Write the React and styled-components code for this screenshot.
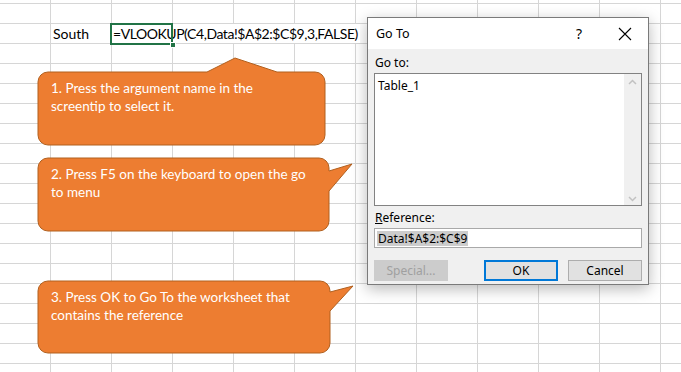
import React from 'react';
import styled, { createGlobalStyle } from 'styled-components';

const GlobalStyle = createGlobalStyle`
    html, body {
        margin: 0;
        padding: 0;
        overflow: hidden;
        background: #fff;
    }
`

const Sheet = styled.div`
    width: 681px;
    height: 372px;
    display: flex;
    background-color: #fff;
    background-image:
        linear-gradient(to right, #d6d6d6 1px, transparent 1px),
        linear-gradient(to bottom, #d6d6d6 1px, transparent 1px);
    background-size: 61px 20px;
    background-position: 50px 3px;
    font-family: Lato, "Liberation Sans", sans-serif;
`

const LeftPane = styled.div`
    width: 358px;
    flex-shrink: 0;
    display: flex;
    flex-direction: column;
`

const CellRow = styled.div`
    display: flex;
    align-items: center;
    height: 19px;
    margin: 24px 0 0 50px;
    font-size: 14px;
    color: #000;
`

const Cell = styled.div`
    width: 61px;
    flex-shrink: 0;
    box-sizing: border-box;
    padding-left: 3px;
`

const FormulaCell = styled.div`
    position: relative;
    height: 19px;
    line-height: 19px;
    padding: 0 2px 0 2px;
    flex-shrink: 0;
    background: #fff;
    white-space: nowrap;
    letter-spacing: -0.45px;

    &::before {
        content: '';
        position: absolute;
        left: -1px;
        top: -1px;
        width: 59px;
        height: 18px;
        border: 2px solid #217346;
    }
    &::after {
        content: '';
        position: absolute;
        left: 59px;
        top: 18px;
        width: 4px;
        height: 4px;
        background: #217346;
        border: 1px solid #fff;
    }
`

const CalloutStack = styled.div`
    display: flex;
    flex-direction: column;
    padding-left: 38px;
`

const CalloutBox = styled.div`
    position: relative;
    width: ${p => p.$w}px;
    height: ${p => p.$h}px;
    margin-top: ${p => p.$top}px;
    box-sizing: border-box;
    padding: 7px 0 0 13px;
    color: #fff;
    font-size: 13.5px;
    line-height: 18px;

    & > svg {
        position: absolute;
        left: 0;
        top: 0;
        overflow: visible;
    }
    & > p {
        position: relative;
        margin: 0;
        width: ${p => p.$textW}px;
    }
`

function calloutPath(w, h, r, tail) {
    const corners = {
        tr: `A${r},${r} 0 0 1 ${w},${r}`,
        br: `A${r},${r} 0 0 1 ${w - r},${h}`,
        bl: `A${r},${r} 0 0 1 0,${h - r}`,
        tl: `A${r},${r} 0 0 1 ${r},0`,
    };
    if (tail.side === 'up') {
        const [x1, ax, ay, x2] = tail.pts;
        return `M${r},0 H${x1} L${ax},${ay} L${x2},0 H${w - r} ${corners.tr} V${h - r} ${corners.br} H${r} ${corners.bl} V${r} ${corners.tl} Z`;
    }
    const [y1, ax, ay, y2] = tail.pts;
    return `M${r},0 H${w - r} ${corners.tr} V${y1} L${ax},${ay} L${w},${y2} V${h - r} ${corners.br} H${r} ${corners.bl} V${r} ${corners.tl} Z`;
}

function Callout({ w, h, top, textW, tail, children }) {
    return (
        <CalloutBox $w={w} $h={h} $top={top} $textW={textW}>
            <svg width={w} height={h}>
                <path d={calloutPath(w, h, 10, tail)} fill="#ed7d31" stroke="#b1601f" strokeWidth="1" />
            </svg>
            <p>{children}</p>
        </CalloutBox>
    );
}

const RightPane = styled.div`
    padding: 17px 0 0 9px;
`

const Dialog = styled.div`
    width: 280px;
    height: 266px;
    border: 1px solid #7a7a7a;
    background: #f0f0f0;
    box-shadow: 0 4px 14px rgba(0, 0, 0, 0.28);
    display: flex;
    flex-direction: column;
    font-family: "Noto Sans", "Open Sans", sans-serif;
    font-size: 12px;
    color: #000;
`

const TitleBar = styled.div`
    height: 31px;
    background: #fff;
    display: flex;
    align-items: center;
    padding-left: 8px;
    font-size: 12.5px;
`

const TitleText = styled.div`
    flex: 1;
`

const TitleButton = styled.div`
    width: 46px;
    height: 31px;
    display: flex;
    align-items: center;
    justify-content: center;
    font-size: 14px;
`

const Body = styled.div`
    flex: 1;
    display: flex;
    flex-direction: column;
    padding: 0 6px;
`

const Label = styled.div`
    height: 16px;
    line-height: 16px;
    margin-top: ${p => p.$top}px;
    margin-bottom: 2px;
    padding-left: 1px;
`

const ListBox = styled.div`
    height: 131px;
    border: 1px solid #828282;
    background: #fff;
    display: flex;
`

const ListItems = styled.div`
    flex: 1;
    padding: 3px 0 0 3px;
`

const ScrollBar = styled.div`
    width: 17px;
    background: #f0f0f0;
    display: flex;
    flex-direction: column;
    justify-content: space-between;
    align-items: center;
    padding: 5px 0 3px;
`

const TextInput = styled.div`
    height: 18px;
    border: 1px solid #a9a9a9;
    background: #fff;
    display: flex;
    align-items: center;
    padding-left: 2px;
`

const Selected = styled.span`
    background: #cccccc;
    line-height: 15px;
    padding: 0 1px;
`

const ButtonRow = styled.div`
    display: flex;
    margin-top: 12px;
    gap: 10px;
`

const Button = styled.div`
    width: 74px;
    height: 21px;
    box-sizing: border-box;
    display: flex;
    align-items: center;
    justify-content: center;
    border: ${p => (p.$default ? '2px solid #0078d7' : '1px solid #adadad')};
    color: ${p => (p.$disabled ? '#a0a0a0' : '#000')};
    border-color: ${p => (p.$disabled ? '#cccccc' : undefined)};
    background: ${p => (p.$disabled ? '#cccccc' : '#e1e1e1')};
    margin-right: ${p => (p.$gap ? p.$gap : 0)}px;
`

const Chevron = ({ up }) => (
    <svg width="9" height="6" viewBox="0 0 9 6">
        <path d={up ? 'M1 5 L4.5 1.5 L8 5' : 'M1 1 L4.5 4.5 L8 1'} fill="none" stroke="#c2c2c2" strokeWidth="1.5" />
    </svg>
);

function App() {
    return (
        <>
            <GlobalStyle />
            <Sheet>
                <LeftPane>
                    <CellRow>
                        <Cell>South</Cell>
                        <FormulaCell>=VLOOKUP(C4,Data!$A$2:$C$9,3,FALSE)</FormulaCell>
                    </CellRow>
                    <CalloutStack>
                        <Callout w={287} h={73} top={29} textW={225} tail={{ side: 'up', pts: [169, 197, -14, 239] }}>
                            1. Press the argument name in the screentip to select it.
                        </Callout>
                        <Callout w={291} h={73} top={13} textW={265} tail={{ side: 'right', pts: [13, 314, 6, 33] }}>
                            2. Press F5 on the keyboard to open the go to menu
                        </Callout>
                        <Callout w={292} h={72} top={50} textW={265} tail={{ side: 'right', pts: [11, 315, 5, 30] }}>
                            3. Press OK to Go To the worksheet that contains the reference
                        </Callout>
                    </CalloutStack>
                </LeftPane>
                <RightPane>
                    <Dialog>
                        <TitleBar>
                            <TitleText>Go To</TitleText>
                            <TitleButton>?</TitleButton>
                            <TitleButton>
                                <svg width="14" height="14" viewBox="0 0 14 14">
                                    <path d="M1 1 L13 13 M13 1 L1 13" stroke="#000" strokeWidth="1.1" />
                                </svg>
                            </TitleButton>
                        </TitleBar>
                        <Body>
                            <Label $top={6}>Go to:</Label>
                            <ListBox>
                                <ListItems>Table_1</ListItems>
                                <ScrollBar>
                                    <Chevron up />
                                    <Chevron />
                                </ScrollBar>
                            </ListBox>
                            <Label $top={4}><u>R</u>eference:</Label>
                            <TextInput><Selected>Data!$A$2:$C$9</Selected></TextInput>
                            <ButtonRow>
                                <Button $disabled $gap={26}>Special...</Button>
                                <Button $default>OK</Button>
                                <Button>Cancel</Button>
                            </ButtonRow>
                        </Body>
                    </Dialog>
                </RightPane>
            </Sheet>
        </>
    );
}

export default App;
